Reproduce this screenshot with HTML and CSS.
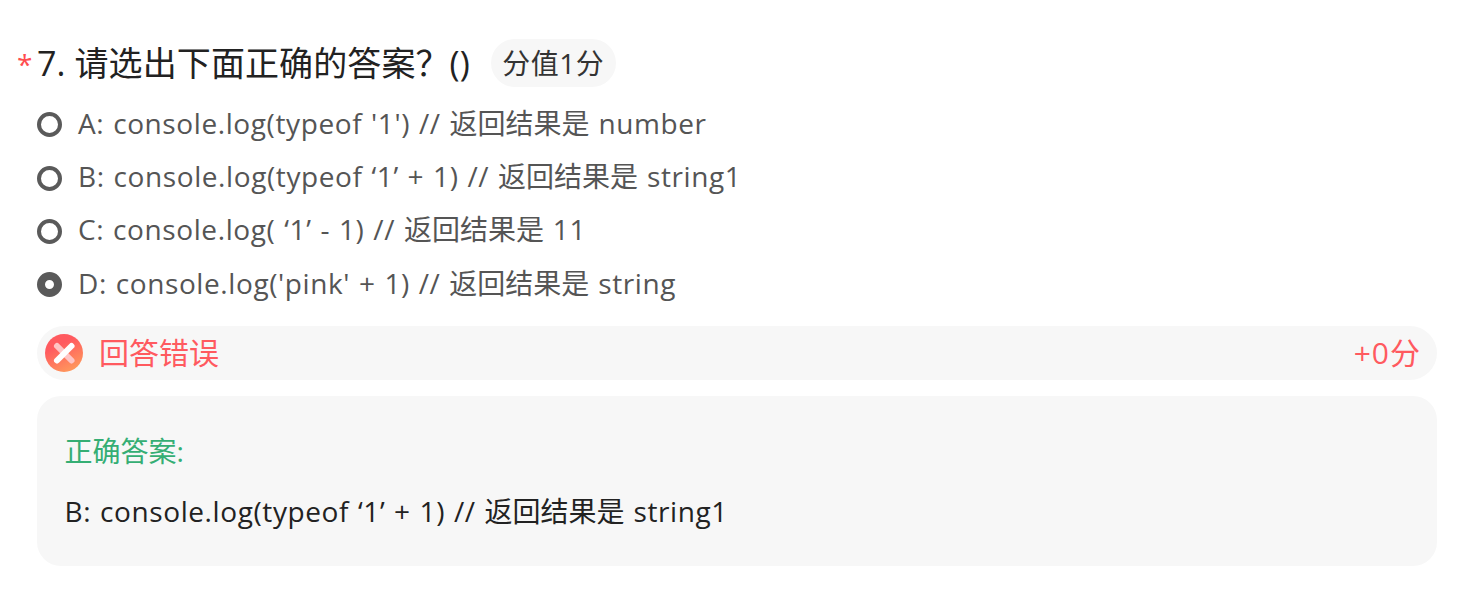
FILE: index.html
```html
<!DOCTYPE html>
<html lang="zh-CN">
<head>
    <meta charset="UTF-8">
    <meta name="viewport" content="width=device-width, initial-scale=1.0">
    <title>题目</title>
    <link rel="stylesheet" href="styles.css">
</head>
<body>

    <div class="question">
        <div class="question-title">
            <span class="required">*</span>
            <span class="title-text">7. 请选出下面正确的答案？()</span>
            <span class="score-tag">分值1分</span>
        </div>

        <div class="options">
            <div class="option"><span class="radio"></span><span class="code">A: console.log(typeof '1') // <span class="zh">返回结果是</span> number</span></div>
            <div class="option"><span class="radio"></span><span class="code">B: console.log(typeof ‘1’ + 1) // <span class="zh">返回结果是</span> string1</span></div>
            <div class="option"><span class="radio"></span><span class="code">C: console.log( ‘1’ - 1) // <span class="zh">返回结果是</span> 11</span></div>
            <div class="option"><span class="radio checked"></span><span class="code">D: console.log('pink' + 1) // <span class="zh">返回结果是</span> string</span></div>
        </div>

        <div class="result">
            <svg class="result-icon" viewBox="0 0 38 38">
                <defs>
                    <linearGradient id="wrongBg" x1="0.35" y1="0.3" x2="0.7" y2="1">
                        <stop offset="0" stop-color="#ff5a5f"/>
                        <stop offset="1" stop-color="#ff9a5c"/>
                    </linearGradient>
                </defs>
                <circle cx="19" cy="19" r="19" fill="url(#wrongBg)"/>
                <path d="M12 12 L26.5 26.5" stroke="#ffc4c4" stroke-width="6" stroke-linecap="round"/>
                <path d="M12 26.5 L26.5 12" stroke="#ffffff" stroke-width="6" stroke-linecap="round"/>
            </svg>
            <span class="result-text">回答错误</span>
            <span class="result-score">+0分</span>
        </div>

        <div class="answer">
            <div class="answer-label">正确答案:</div>
            <div class="answer-text code">B: console.log(typeof ‘1’ + 1) // <span class="zh">返回结果是</span> string1</div>
        </div>
    </div>

</body>
</html>
```

FILE: styles.css
```css
body {
    font-family: "Open Sans", "Noto Sans CJK SC", sans-serif;
    margin: 0;
    background-color: #fff;
}
.question {
    padding: 39px 40px 0 37px;
}
.question-title {
    display: flex;
    align-items: center;
    height: 48px;
    position: relative;
}
.required {
    position: absolute;
    left: -20px;
    top: 6px;
    color: #ff4d4f;
    font-size: 28px;
}
.title-text {
    font-size: 34px;
    line-height: 48px;
    letter-spacing: 0.1px;
    color: #222;
}
.score-tag {
    margin-left: 21px;
    padding: 0 11.5px;
    line-height: 48px;
    font-size: 28px;
    letter-spacing: 0.5px;
    color: #333;
    background-color: #f7f7f7;
    border-radius: 24px;
}
.options {
    margin-top: 11px;
}
.option {
    display: flex;
    align-items: center;
    gap: 16px;
    height: 53.4px;
    font-size: 28px;
    color: #555;
}
.code {
    letter-spacing: 0.6px;
    word-spacing: 1px;
}
.zh {
    letter-spacing: 0;
}
.option .code {
    margin-bottom: 6px;
}
.radio {
    width: 25px;
    height: 25px;
    box-sizing: border-box;
    border: 4px solid #5a5a5a;
    border-radius: 50%;
    background-color: #fff;
}
.radio.checked {
    border: 8px solid #5a5a5a;
}
.result {
    display: flex;
    align-items: center;
    height: 54px;
    margin-top: 14px;
    padding: 0 16px 0 8px;
    background-color: #f7f7f7;
    border-radius: 27px;
}
.result-icon {
    width: 38px;
    height: 38px;
}
.result-text {
    margin-left: 16px;
    margin-bottom: 4px;
    font-size: 30px;
    color: #ff5a5f;
}
.result-score {
    margin-left: auto;
    margin-bottom: 4px;
    font-size: 30px;
    letter-spacing: 1px;
    color: #ff5a5f;
}
.answer {
    margin-top: 16px;
    height: 170px;
    box-sizing: border-box;
    padding: 33px 28px 0 27.5px;
    background-color: #f7f7f7;
    border-radius: 24px;
    font-size: 28px;
}
.answer-label {
    line-height: 44px;
    color: #35ae74;
}
.answer-text {
    margin-top: 16px;
    line-height: 44px;
    color: #222;
}
```
